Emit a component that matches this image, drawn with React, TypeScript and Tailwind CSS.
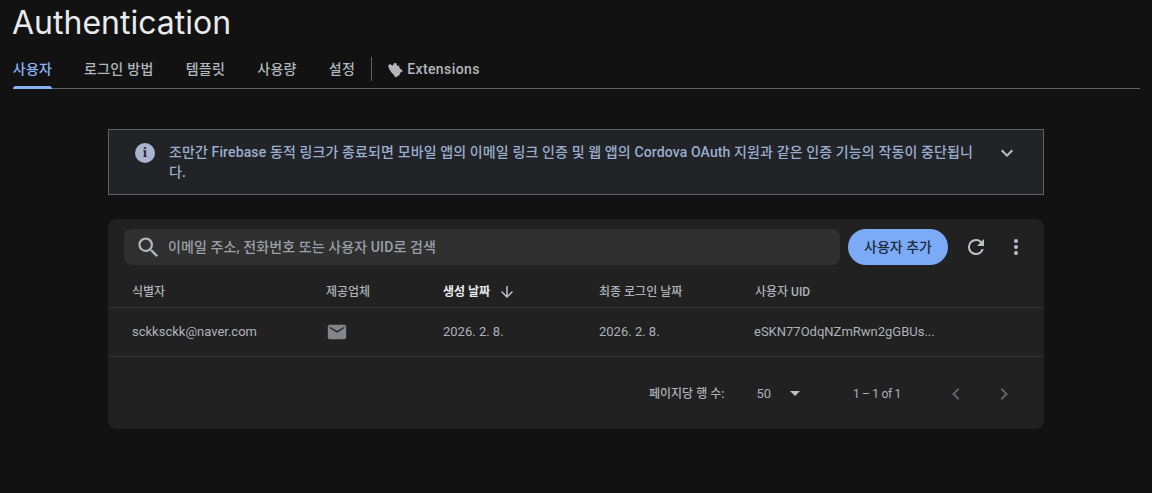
const tabs = ["로그인 방법", "템플릿", "사용량", "설정"];

const Tabs = () => (
	<div className="ml-[13px] mr-3 flex h-[38px] items-center border-b border-[#5f6368] pb-px text-sm font-medium tracking-[0.3px] text-[#b3b7bc]">
		<div className="relative flex h-full w-[39px] items-center justify-center whitespace-nowrap text-[#8ab4f8]">
			사용자
			<span className="absolute bottom-[-2px] left-0 h-[3px] w-full rounded-t-[3px] bg-[#8ab4f8]" />
		</div>
		{tabs.map((tab) => (
			<div key={tab} className="ml-8 whitespace-nowrap">
				{tab}
			</div>
		))}
		<div className="ml-4 h-6 w-px bg-[#5f6368]" />
		<svg className="ml-[15px] mt-px h-4 w-4" viewBox="0 0 16 16" fill="#b3b7bc">
			<path d="M2 6.500L1.200 4a1.800 1.800 0 0 1 3.300-1L6 3.500 6.500 2a1.800 1.800 0 0 1 3.300.3L10 4l2-.5.5 2.500L16 9l-3 2-.5 2-4 2.500L6 12l-2-2z" />
		</svg>
		<div className="ml-1 tracking-[0.4px]">Extensions</div>
	</div>
);

const Banner = () => (
	<div className="flex h-[66px] border border-[#5f6368] bg-[#212327] pl-[26px] pr-6 pt-3">
		<div className="mt-px flex h-5 w-5 shrink-0 items-center justify-center rounded-full bg-[#a8b4d0] font-serif text-sm font-bold leading-none text-[#3a1d2d]">
			i
		</div>
		<p className="ml-[14px] w-[812px] shrink-0 text-sm font-medium leading-5 tracking-[0.12px] text-[#9aaecd]">
			조만간 Firebase 동적 링크가 종료되면 모바일 앱의 이메일 링크 인증 및 웹 앱의 Cordova OAuth 지원과 같은 인증 기능의 작동이 중단됩니다.
		</p>
		<svg className="-mt-px ml-[14px] h-6 w-6 shrink-0" viewBox="0 0 24 24" fill="#bdc1c6">
			<path d="M7.410 8.590L12 13.170l4.590-4.580L18 10l-6 6-6-6 1.410-1.410z" />
		</svg>
	</div>
);

const Toolbar = () => (
	<div className="flex h-9 items-center">
		<div className="flex h-full w-[716px] items-center rounded-lg bg-[#303030] pl-[11px] text-sm font-medium tracking-[0.1px] text-[#9aa0a6]">
			<svg className="h-[27px] w-[27px]" viewBox="0 0 24 24" fill="#b3b7bc">
				<path d="M15.500 14h-.79l-.28-.27A6.470 6.470 0 0 0 16 9.500 6.500 6.500 0 1 0 9.500 16c1.610 0 3.090-.59 4.230-1.570l.27.28v.79l5 4.990L20.490 19l-4.990-5zm-6 0C7.010 14 5 11.990 5 9.500S7.010 5 9.500 5 14 7.010 14 9.500 11.990 14 9.500 14z" />
			</svg>
			<span className="ml-[6px]">이메일 주소, 전화번호 또는 사용자 UID로 검색</span>
		</div>
		<button className="ml-2 h-full w-[100px] rounded-full bg-[#7baaf7] text-sm font-medium text-[#1f2a3d]">
			사용자 추가
		</button>
		<svg className="ml-4 h-6 w-6" viewBox="0 0 24 24" fill="#bdc1c6">
			<path d="M17.650 6.350A7.960 7.960 0 0 0 12 4a8 8 0 1 0 7.730 10h-2.080A6 6 0 1 1 12 6c1.660 0 3.140.69 4.220 1.780L13 11h7V4l-2.350 2.350z" />
		</svg>
		<svg className="ml-4 h-6 w-6" viewBox="0 0 24 24" fill="#bdc1c6">
			<path d="M12 8a2 2 0 1 0 0-4 2 2 0 0 0 0 4zm0 2a2 2 0 1 0 0 4 2 2 0 0 0 0-4zm0 6a2 2 0 1 0 0 4 2 2 0 0 0 0-4z" />
		</svg>
	</div>
);

const UserTable = () => (
	<div className="text-[13px] text-[#aeb2b8]">
		<div className="grid h-[43px] grid-cols-[194px_117px_156px_156px_1fr] items-center border-b border-[#303134] px-4 pt-3 text-xs font-medium">
			<div className="pl-2">식별자</div>
			<div className="pl-2">제공업체</div>
			<div className="flex items-center pl-2 font-bold text-[#e8eaed]">
				생성 날짜
				<svg className="ml-2 h-[18px] w-[18px]" viewBox="0 0 24 24" fill="#bdc1c6">
					<path d="M20 12l-1.410-1.410L13 16.170V4h-2v12.170l-5.580-5.590L4 12l8 8 8-8z" />
				</svg>
			</div>
			<div className="pl-2">최종 로그인 날짜</div>
			<div className="pl-2">사용자 UID</div>
		</div>
		<div className="grid h-[49px] grid-cols-[194px_117px_156px_156px_1fr] items-center border-b border-[#303134] px-4">
			<div className="pl-2">sckksckk@naver.com</div>
			<div className="pl-2">
				<svg className="h-[22px] w-[22px]" viewBox="0 0 24 24" fill="#80868b">
					<path d="M4 4h16a2 2 0 0 1 2 2v12a2 2 0 0 1-2 2H4a2 2 0 0 1-2-2V6a2 2 0 0 1 2-2zm0 3.700l8 5 8-5V6.200l-8 4.800-8-4.800z" />
				</svg>
			</div>
			<div className="pl-2">2026. 2. 8.</div>
			<div className="pl-2">2026. 2. 8.</div>
			<div className="-ml-px pl-2">eSKN77OdqNZmRwn2gGBUs...</div>
		</div>
	</div>
);

const Pagination = () => (
	<div className="flex h-[72px] items-center pt-px text-xs text-[#aeb2b8]">
		<span className="ml-[541px] font-medium">페이지당 행 수:</span>
		<span className="ml-8 text-[13px]">50</span>
		<span className="ml-[19px] h-0 w-0 border-x-[5px] border-t-[5px] border-x-transparent border-t-[#bdc1c6]" />
		<span className="ml-[53px] tracking-[-0.3px]">1 – 1 of 1</span>
		<svg className="ml-[43px] h-6 w-6" viewBox="0 0 24 24" fill="#5f6368">
			<path d="M15.410 7.410L14 6l-6 6 6 6 1.410-1.410L10.830 12z" />
		</svg>
		<svg className="ml-6 h-6 w-6" viewBox="0 0 24 24" fill="#5f6368">
			<path d="M10 6L8.590 7.410 13.170 12l-4.580 4.590L10 18l6-6z" />
		</svg>
	</div>
);

export default function App() {
	return (
		<div className="h-[493px] w-[1152px] overflow-hidden bg-[#121212] font-['Roboto','Noto_Sans_CJK_KR',sans-serif]">
			<h1 className="ml-3 h-[51px] pt-[3px] font-['Inter'] text-[32px] leading-10 text-[#e8eaed]">Authentication</h1>
			<Tabs />
			<div className="ml-[108px] mt-10 w-[936px]">
				<Banner />
				<div className="mt-6 h-[210px] rounded-lg bg-[#212121] pt-[10px]">
					<div className="px-4">
						<Toolbar />
					</div>
					<UserTable />
					<Pagination />
				</div>
			</div>
		</div>
	);
}
